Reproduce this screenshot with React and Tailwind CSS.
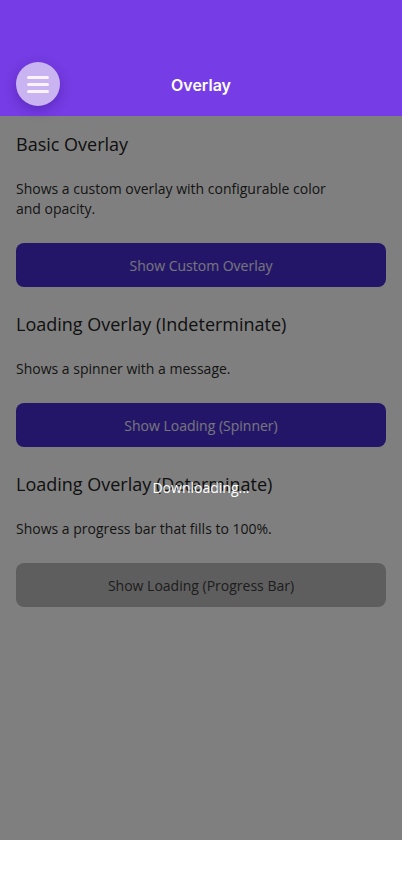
import { useState } from "react";

const sections = [
  {
    title: "Basic Overlay",
    text: "Shows a custom overlay with configurable color and opacity.",
    button: "Show Custom Overlay",
    disabled: false,
  },
  {
    title: "Loading Overlay (Indeterminate)",
    text: "Shows a spinner with a message.",
    button: "Show Loading (Spinner)",
    disabled: false,
  },
  {
    title: "Loading Overlay (Determinate)",
    text: "Shows a progress bar that fills to 100%.",
    button: "Show Loading (Progress Bar)",
    disabled: true,
  },
];

function App() {
  const [loading] = useState(true);

  return (
    <div className="w-full h-[874px] bg-white flex flex-col overflow-hidden">
      {/* Header */}
      <header className="h-[116px] shrink-0 bg-[#763ce5] flex items-end pb-[10px] px-4 relative z-10">
        <div className="flex items-center w-full h-11">
          <button className="w-11 h-11 rounded-full bg-[#c9b3f0] shadow-[0_4px_12px_rgba(60,20,140,0.45)] flex flex-col items-center justify-center gap-[4px]">
            <span className="block w-[22px] h-[3px] rounded-full bg-[#fbf2ff]"></span>
            <span className="block w-[22px] h-[3px] rounded-full bg-[#fbf2ff]"></span>
            <span className="block w-[22px] h-[3px] rounded-full bg-[#fbf2ff]"></span>
          </button>
          <h1 className="flex-1 text-center text-white text-[16px] font-semibold font-['Inter',sans-serif] mr-11 translate-y-[1px]">
            Overlay
          </h1>
        </div>
      </header>

      {/* Content */}
      <main className="relative flex-1 font-['Open_Sans',sans-serif]">
        <div className="px-4 pt-[15px] flex flex-col gap-6">
          {sections.map((s) => (
            <section key={s.title} className="flex flex-col">
              <h2 className="text-[18px] leading-[26px] text-[#222]">{s.title}</h2>
              <p className="mt-[22px] text-[14px] leading-[20px] text-[#2b2b2b] max-w-[330px]">{s.text}</p>
              <button
                className={`mt-6 h-11 w-full rounded-lg text-[14px] ${
                  s.disabled ? "bg-[#bdbdbd] text-[#3a3a3a]" : "bg-[#472dd1] text-white/90"
                }`}
              >
                {s.button}
              </button>
            </section>
          ))}
        </div>

        {loading && (
          <div className="absolute inset-0 bg-black/50 flex flex-col items-center justify-center">
            <span className="mt-5 text-[14px] leading-5 text-white">Downloading...</span>
          </div>
        )}
      </main>

      <div className="h-[34px] shrink-0 bg-white"></div>
    </div>
  );
}

export default App;
